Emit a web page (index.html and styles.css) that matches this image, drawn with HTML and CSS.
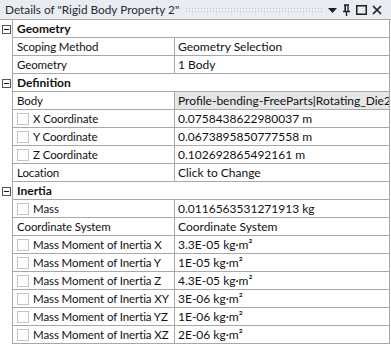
FILE: index.html
```html
<!DOCTYPE html>
<html>
<head>
<meta charset="utf-8">
<link rel="stylesheet" href="styles.css">
</head>
<body>
<div class="panel">
  <div class="titlebar">
    <span class="title">Details of "Rigid Body Property 2"</span>
    <span class="grip"></span>
    <span class="tools">
      <svg width="9" height="6" viewBox="0 0 9 6" class="drop"><path d="M0 0H9L4.5 5Z" fill="#1e1e1e"/></svg>
      <svg width="9" height="12" viewBox="0 0 9 12" class="pin"><path d="M2 1H7M3 1V7M6 1V7M1 7.5H8M4.5 8V12" stroke="#1e1e1e" stroke-width="1.3" fill="none"/><rect x="3" y="1" width="1" height="6" fill="#1e1e1e"/></svg>
      <svg width="11" height="11" viewBox="0 0 11 11" class="max"><rect x="0.75" y="1.75" width="9.5" height="8.5" fill="none" stroke="#1e1e1e" stroke-width="1.5"/></svg>
      <svg width="10" height="10" viewBox="0 0 10 10" class="close"><path d="M1 1L9 9M9 1L1 9" stroke="#1e1e1e" stroke-width="1.7"/></svg>
    </span>
  </div>
  <div class="grid">
    <div class="row group"><span class="gutter"><span class="exp"></span></span><span class="gcell">Geometry</span></div>
    <div class="row"><span class="gutter"></span><span class="name">Scoping Method</span><span class="value">Geometry Selection</span></div>
    <div class="row"><span class="gutter"></span><span class="name">Geometry</span><span class="value">1 Body</span></div>

    <div class="row group"><span class="gutter"><span class="exp"></span></span><span class="gcell">Definition</span></div>
    <div class="row"><span class="gutter"></span><span class="name">Body</span><span class="value ro">Profile-bending-FreeParts|Rotating_Die2</span></div>
    <div class="row"><span class="gutter"></span><span class="name"><span class="cb"></span>X Coordinate</span><span class="value">0.0758438622980037 m</span></div>
    <div class="row"><span class="gutter"></span><span class="name"><span class="cb"></span>Y Coordinate</span><span class="value">0.0673895850777558 m</span></div>
    <div class="row"><span class="gutter"></span><span class="name"><span class="cb"></span>Z Coordinate</span><span class="value">0.102692865492161 m</span></div>
    <div class="row"><span class="gutter"></span><span class="name">Location</span><span class="value">Click to Change</span></div>

    <div class="row group"><span class="gutter"><span class="exp"></span></span><span class="gcell">Inertia</span></div>
    <div class="row"><span class="gutter"></span><span class="name"><span class="cb"></span>Mass</span><span class="value">0.0116563531271913 kg</span></div>
    <div class="row"><span class="gutter"></span><span class="name">Coordinate System</span><span class="value">Coordinate System</span></div>
    <div class="row"><span class="gutter"></span><span class="name"><span class="cb"></span>Mass Moment of Inertia X</span><span class="value">3.3E-05 kg·m²</span></div>
    <div class="row"><span class="gutter"></span><span class="name"><span class="cb"></span>Mass Moment of Inertia Y</span><span class="value">1E-05 kg·m²</span></div>
    <div class="row"><span class="gutter"></span><span class="name"><span class="cb"></span>Mass Moment of Inertia Z</span><span class="value">4.3E-05 kg·m²</span></div>
    <div class="row"><span class="gutter"></span><span class="name"><span class="cb"></span>Mass Moment of Inertia XY</span><span class="value">3E-06 kg·m²</span></div>
    <div class="row"><span class="gutter"></span><span class="name"><span class="cb"></span>Mass Moment of Inertia YZ</span><span class="value">1E-06 kg·m²</span></div>
    <div class="row"><span class="gutter"></span><span class="name"><span class="cb"></span>Mass Moment of Inertia XZ</span><span class="value">2E-06 kg·m²</span></div>
  </div>
</div>
</body>
</html>
```

FILE: styles.css
```css
html, body {
  margin: 0;
  padding: 0;
  background: #ffffff;
}
.panel {
  width: 391px;
  height: 348px;
  background: #ffffff;
  font-family: Lato, "Open Sans", sans-serif;
  font-size: 12px;
  color: #111;
  overflow: hidden;
}
.titlebar {
  height: 19px;
  background: #e9ecf3;
  border-bottom: 1px solid #a8a8a8;
  display: flex;
  align-items: center;
  padding-left: 5px;
  padding-right: 9px;
}
.title {
  font-size: 11.8px;
  color: #2a2a2a;
  white-space: nowrap;
}
.grip {
  flex: 1;
  height: 5px;
  margin: 0 6px 0 6px;
  background-image: radial-gradient(circle, #b8bcc6 0.6px, transparent 0.9px);
  background-size: 3px 3px;
}
.tools {
  display: flex;
  align-items: center;
  gap: 5px;
}
.drop { margin-top: 2px; }
.row {
  display: flex;
  height: 18px;
}
.gutter {
  width: 12px;
  flex: none;
  border-right: 1px solid #a8a8a8;
  display: flex;
  align-items: center;
  justify-content: center;
}
.exp {
  width: 7px;
  height: 7px;
  border: 1px solid #555;
  background: #fff;
  position: relative;
}
.exp::after {
  content: "";
  position: absolute;
  left: 1px;
  top: 3px;
  width: 5px;
  height: 1px;
  background: #111;
}
.name, .value, .gcell {
  box-sizing: border-box;
  height: 18px;
  border-bottom: 1px solid #a8a8a8;
  border-right: 1px solid #a8a8a8;
  display: flex;
  align-items: center;
  padding-left: 4px;
  white-space: nowrap;
  overflow: hidden;
}
.name {
  width: 162px;
  flex: none;
  font-size: 11.5px;
  letter-spacing: -0.1px;
}
.value {
  width: 215px;
  flex: none;
  padding-left: 3px;
}
.value.ro {
  background: #e6e6e6;
}
.gcell {
  width: 377px;
  flex: none;
  font-weight: bold;
}
.cb {
  width: 12px;
  height: 12px;
  box-sizing: border-box;
  border: 1px solid #c4c4c4;
  background: #fff;
  margin-right: 4px;
  flex: none;
}
```
